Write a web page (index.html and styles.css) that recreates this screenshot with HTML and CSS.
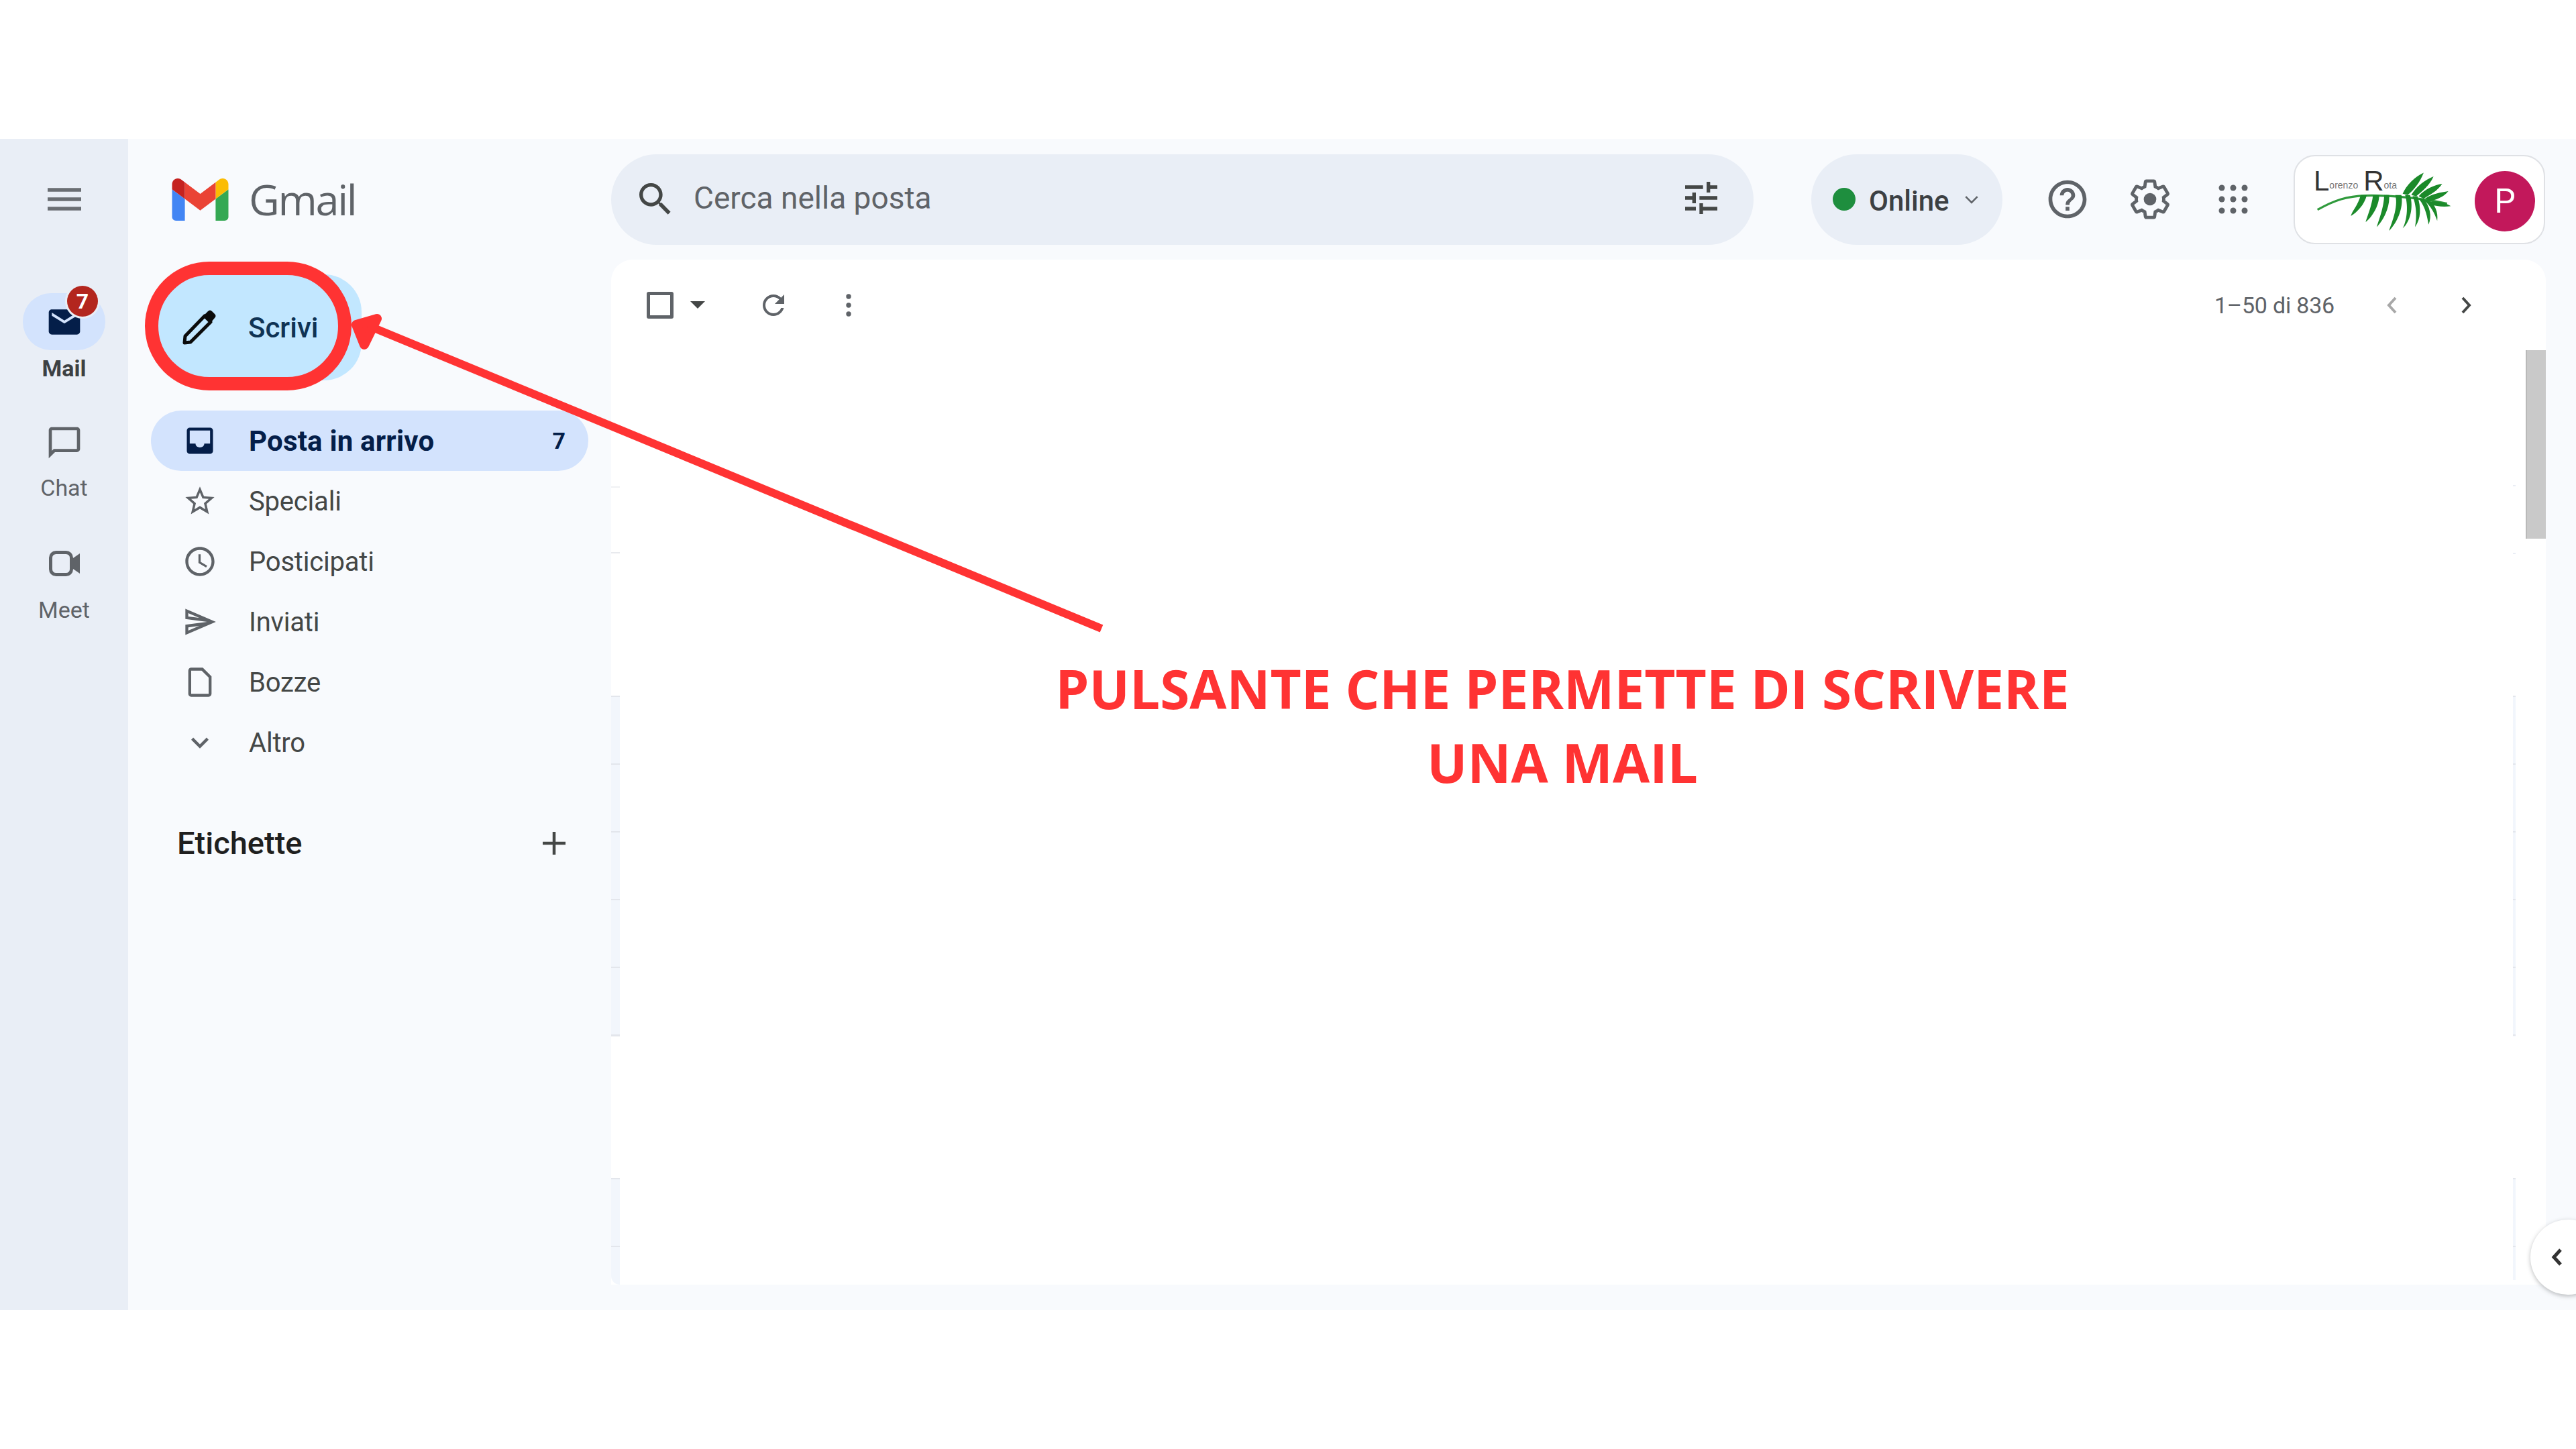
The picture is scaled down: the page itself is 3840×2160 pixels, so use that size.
FILE: index.html
```html
<!DOCTYPE html>
<html lang="it">
<head>
<meta charset="utf-8">
<title>Gmail</title>
<link rel="stylesheet" href="styles.css">
</head>
<body>
<div class="app">
  <nav class="rail">
    <svg class="rail-menu" viewBox="0 0 50 34"><path d="M0 3h50M0 17h50M0 31h50"/></svg>
    <div class="rail-item">
      <div class="rail-pill rail-pill-on">
        <svg viewBox="0 0 24 24" class="rail-icon icon-navy"><path d="M20 4H4c-1.1 0-1.99.9-1.99 2L2 18c0 1.1.9 2 2 2h16c1.1 0 2-.9 2-2V6c0-1.1-.9-2-2-2zm0 4l-8 5-8-5V6l8 5 8-5v2z"/></svg>
        <span class="rail-badge">7</span>
      </div>
      <span class="rail-label rail-label-on">Mail</span>
    </div>
    <div class="rail-item">
      <div class="rail-pill">
        <svg viewBox="0 0 24 24" class="rail-icon icon-grey"><path d="M20 2H4c-1.1 0-1.99.9-1.99 2L2 22l4-4h14c1.1 0 2-.9 2-2V4c0-1.1-.9-2-2-2zm0 14H5.17L4 17.17V4h16v12z"/></svg>
      </div>
      <span class="rail-label">Chat</span>
    </div>
    <div class="rail-item">
      <div class="rail-pill">
        <svg viewBox="0 0 46 38" class="rail-meet"><rect class="meet-body" x="2.500" y="2.500" width="31" height="33" rx="8"/><path class="meet-lens" d="M33 13L46 4v30L33 25z"/></svg>
      </div>
      <span class="rail-label rail-label-meet">Meet</span>
    </div>
  </nav>

  <div class="workspace">
    <header class="topbar">
      <div class="brand">
        <svg class="brand-mark" viewBox="52 42 88 66">
          <path fill="#4285f4" d="M58 108h14V74L52 59v43c0 3.32 2.69 6 6 6"/>
          <path fill="#34a853" d="M120 108h14c3.32 0 6-2.69 6-6V59l-20 15"/>
          <path fill="#fbbc04" d="M120 48v26l20-15v-8c0-7.42-8.47-11.65-14.4-7.2"/>
          <path fill="#ea4335" d="M72 74V48l24 18 24-18v26L96 92"/>
          <path fill="#c5221f" d="M52 51v8l20 15V48l-5.6-4.2c-5.94-4.45-14.4-.22-14.4 7.2"/>
        </svg>
        <span class="brand-name">Gmail</span>
      </div>
      <div class="search">
        <svg viewBox="0 0 24 24" class="search-icon icon-dark"><path d="M15.5 14h-.79l-.28-.27C15.41 12.59 16 11.11 16 9.5 16 5.91 13.09 3 9.5 3S3 5.91 3 9.5 5.91 16 9.5 16c1.61 0 3.09-.59 4.23-1.57l.27.28v.79l5 4.99L20.49 19l-4.99-5zm-6 0C7.01 14 5 11.99 5 9.5S7.01 5 9.5 5 14 7.01 14 9.5 11.99 14 9.5 14z"/></svg>
        <span class="search-text">Cerca nella posta</span>
        <svg viewBox="0 0 24 24" class="tune-icon icon-dark"><path d="M3 17v2h6v-2H3zM3 5v2h10V5H3zm10 16v-2h8v-2h-8v-2h-2v6h2zM7 9v2H3v2h4v2h2V9H7zm14 4v-2H11v2h10zm-6-4h2V7h4V5h-4V3h-2v6z"/></svg>
      </div>
      <div class="status">
        <span class="status-dot"></span>
        <span class="status-text">Online</span>
        <svg class="status-caret" viewBox="0 0 20 12"><path d="M2 2l8 8 8-8"/></svg>
      </div>
      <div class="top-icons">
        <svg viewBox="0 0 24 24" class="top-icon icon-grey"><path d="M11 18h2v-2h-2v2zm1-16C6.48 2 2 6.48 2 12s4.48 10 10 10 10-4.48 10-10S17.52 2 12 2zm0 18c-4.41 0-8-3.59-8-8s3.59-8 8-8 8 3.59 8 8-3.59 8-8 8zm0-14c-2.21 0-4 1.79-4 4h2c0-1.1.9-2 2-2s2 .9 2 2c0 2-3 1.75-3 5h2c0-2.25 3-2.5 3-5 0-2.21-1.79-4-4-4z"/></svg>
        <svg viewBox="0 0 24 24" class="top-icon gear"><path class="gear-rim" d="M19.14 12.94c.04-.3.06-.61.06-.94 0-.32-.02-.64-.07-.94l2.03-1.58c.18-.14.23-.41.12-.61l-1.92-3.32c-.12-.22-.37-.29-.59-.22l-2.39.96c-.5-.38-1.03-.7-1.62-.94l-.36-2.54c-.04-.24-.24-.41-.48-.41h-3.84c-.24 0-.43.17-.47.41l-.36 2.54c-.59.24-1.13.57-1.62.94l-2.39-.96c-.22-.08-.47 0-.59.22L2.74 8.87c-.12.21-.08.47.12.61l2.03 1.58c-.05.3-.09.63-.09.94s.02.64.07.94l-2.03 1.58c-.18.14-.23.41-.12.61l1.92 3.32c.12.22.37.29.59.22l2.39-.96c.5.38 1.03.7 1.62.94l.36 2.54c.05.24.24.41.48.41h3.84c.24 0 .44-.17.47-.41l.36-2.54c.59-.24 1.13-.56 1.62-.94l2.39.96c.22.08.47 0 .59-.22l1.92-3.32c.12-.22.07-.47-.12-.61l-2.01-1.58z"/><circle class="gear-hub" cx="12" cy="12" r="3.3"/></svg>
        <svg viewBox="0 0 46 46" class="grid-icon icon-grey">
          <circle cx="6" cy="6" r="4.5"/><circle cx="23" cy="6" r="4.5"/><circle cx="40" cy="6" r="4.5"/>
          <circle cx="6" cy="23" r="4.5"/><circle cx="23" cy="23" r="4.5"/><circle cx="40" cy="23" r="4.5"/>
          <circle cx="6" cy="40" r="4.5"/><circle cx="23" cy="40" r="4.5"/><circle cx="40" cy="40" r="4.5"/>
        </svg>
      </div>
      <div class="account">
        <div class="org-logo">
          <svg class="frond" viewBox="0 0 220 100">
            <path class="frond-rib" d="M2 66C30 50 50 44 80 43C120 42 175 48 212 56"/>
            <g class="frond-leaves">
              <path d="M72 42C68 58 58 68 56 76C66 70 78 58 82 42z"/>
              <path d="M92 42C90 60 82 78 80 86C90 78 102 60 102 42z"/>
              <path d="M110 42C110 62 100 86 98 94C108 84 120 62 118 42z"/>
              <path d="M128 42C134 62 120 92 118 100C130 88 142 64 138 42z"/>
              <path d="M144 42C150 62 146 86 140 96C152 86 158 62 152 42z"/>
              <path d="M156 44C164 62 162 84 160 94C170 80 170 62 164 44z"/>
              <path d="M166 48C178 62 180 80 182 90C188 76 184 60 174 48z"/>
              <path d="M174 50C186 60 192 72 196 84C198 70 192 56 182 50z"/>
              <path d="M140 40C146 26 160 12 174 6C168 22 158 34 148 42z"/>
              <path d="M154 42C162 28 176 18 190 12C184 26 172 36 162 44z"/>
              <path d="M166 44C176 32 192 26 204 24C196 36 184 42 174 48z"/>
              <path d="M176 48C188 40 202 38 214 36C206 46 194 50 184 52z"/>
              <path d="M182 54C194 50 208 54 218 60C206 62 194 60 186 58z"/>
            </g>
          </svg>
          <div class="org-name"><span class="org-cap">L</span><span class="org-small">orenzo</span><span class="org-cap org-cap-r">R</span><span class="org-small">ota</span></div>
        </div>
        <div class="avatar">P</div>
      </div>
    </header>

    <div class="body">
      <aside class="sidebar">
        <div class="compose">
          <svg class="compose-icon" viewBox="0 0 50 52">
            <path class="pen-body" d="M3 49l1-10L33 9l9 9L12 48z"/>
            <path class="pen-tip" d="M32 8l6-6c2-2 4-2 6 0l4 4c2 2 2 4 0 6l-5 6z"/>
          </svg>
          <span class="compose-text">Scrivi</span>
        </div>
        <ul class="nav">
          <li class="nav-item nav-item-on">
            <svg viewBox="0 0 24 24" class="nav-icon icon-navy"><path d="M19 3H5c-1.1 0-2 .9-2 2v14c0 1.1.9 2 2 2h14c1.1 0 2-.9 2-2V5c0-1.1-.9-2-2-2zm0 11h-4c0 1.66-1.34 2.6-3 2.6s-3-.94-3-2.6H5V5h14v9z"/></svg>
            <span class="nav-text">Posta in arrivo</span>
            <span class="nav-count">7</span>
          </li>
          <li class="nav-item">
            <svg viewBox="0 0 24 24" class="nav-icon icon-grey"><path d="M22 9.24l-7.19-.62L12 2 9.19 8.63 2 9.24l5.46 4.73L5.82 21 12 17.27 18.18 21l-1.63-7.03L22 9.24zM12 15.4l-3.76 2.27 1-4.28-3.32-2.88 4.38-.38L12 6.1l1.71 4.04 4.38.38-3.32 2.88 1 4.28L12 15.4z"/></svg>
            <span class="nav-text">Speciali</span>
          </li>
          <li class="nav-item">
            <svg viewBox="0 0 24 24" class="nav-icon icon-grey"><path d="M11.99 2C6.47 2 2 6.48 2 12s4.47 10 9.99 10C17.52 22 22 17.52 22 12S17.52 2 11.99 2zM12 20c-4.42 0-8-3.58-8-8s3.58-8 8-8 8 3.58 8 8-3.58 8-8 8zm.5-13H11v6l5.25 3.15.75-1.23-4.5-2.67z"/></svg>
            <span class="nav-text">Posticipati</span>
          </li>
          <li class="nav-item">
            <svg viewBox="0 0 24 24" class="nav-icon icon-grey"><path d="M4 6.03l7.51 3.22-7.52-1 .01-2.22m7.5 8.72L4 17.97v-2.22l7.5-1M2.01 3L2 10l15 2-15 2 .01 7L23 12 2.01 3z"/></svg>
            <span class="nav-text">Inviati</span>
          </li>
          <li class="nav-item">
            <svg viewBox="0 0 24 24" class="nav-icon icon-grey"><path d="M14 2H6c-1.1 0-1.99.9-1.99 2L4 20c0 1.1.89 2 1.99 2H18c1.1 0 2-.9 2-2V8l-6-6zM6 20V4h7.2L18 8.800V20H6z"/></svg>
            <span class="nav-text">Bozze</span>
          </li>
          <li class="nav-item">
            <svg viewBox="0 0 24 24" class="nav-icon icon-grey"><path d="M16.59 8.59L12 13.17 7.41 8.59 6 10l6 6 6-6z"/></svg>
            <span class="nav-text">Altro</span>
          </li>
        </ul>
        <div class="labels">
          <span class="labels-title">Etichette</span>
          <svg class="labels-add" viewBox="0 0 34 34"><path d="M17 0v34M0 17h34"/></svg>
        </div>
      </aside>

      <main class="main">
        <div class="toolbar">
          <span class="check"></span>
          <span class="check-caret"></span>
          <svg viewBox="0 0 24 24" class="tool-refresh icon-grey"><path d="M17.65 6.35C16.2 4.9 14.21 4 12 4c-4.42 0-7.99 3.58-7.99 8s3.57 8 7.99 8c3.73 0 6.84-2.55 7.73-6h-2.08c-.82 2.33-3.04 4-5.65 4-3.31 0-6-2.69-6-6s2.69-6 6-6c1.66 0 3.14.69 4.22 1.78L13 11h7V4l-2.35 2.35z"/></svg>
          <svg viewBox="0 0 8 34" class="tool-more icon-grey"><circle cx="4" cy="4" r="3.7"/><circle cx="4" cy="17" r="3.7"/><circle cx="4" cy="30" r="3.700"/></svg>
          <span class="pager-text">1–50 di 836</span>
          <svg class="pager-prev" viewBox="0 0 16 26"><path d="M13 2L3 13l10 11"/></svg>
          <svg class="pager-next" viewBox="0 0 16 26"><path d="M3 2l10 11L3 24"/></svg>
        </div>
        <div class="scrollbar"></div>
        <div class="ghost ghost-tick-a"></div>
        <div class="ghost ghost-tick-b"></div>
        <div class="ghost ghost-mid"></div>
        <div class="ghost ghost-low"></div>
        <div class="ghost-right ghost-right-tick-a"></div>
        <div class="ghost-right ghost-right-tick-b"></div>
        <div class="ghost-right ghost-right-mid"></div>
        <div class="ghost-right ghost-right-low"></div>
      </main>
    </div>
  </div>
  <div class="side-tab">
    <svg viewBox="0 0 20 30"><path d="M15 4L5 15l10 11"/></svg>
  </div>
</div>

<svg class="callout" viewBox="0 0 3840 2160">
  <rect class="callout-ring" x="226" y="400" width="288" height="172" rx="86"/>
  <path class="callout-shaft" d="M1642 937L560 490"/>
  <path class="callout-head" d="M531 484L562 475L543 514z"/>
</svg>
<p class="callout-text">PULSANTE CHE PERMETTE DI SCRIVERE<br>UNA MAIL</p>
</body>
</html>
```

FILE: styles.css
```css
* { box-sizing: border-box; }
html, body { margin: 0; padding: 0; background: #fff; }
body { position: relative; width: 3840px; height: 2160px; padding-top: 207px; overflow: hidden; font-family: Roboto, "Liberation Sans", sans-serif; color: #444746; }
svg { display: block; flex: none; }
ul { list-style: none; margin: 0; padding: 0; }

.icon-grey { fill: #5f6368; }
.icon-dark { fill: #444746; }
.icon-navy { fill: #041e49; }

.app { position: relative; height: 1746px; display: flex; background: #f8fafd; overflow: hidden; }

.rail { width: 191px; flex: none; background: #e9eef6; display: flex; flex-direction: column; align-items: center; padding-top: 73px; }
.rail-menu { width: 50px; height: 34px; fill: none; stroke: #6a6e73; stroke-width: 5.500; margin-bottom: 123px; }
.rail-item { display: flex; flex-direction: column; align-items: center; width: 100%; height: 180px; }
.rail-pill { position: relative; width: 123px; height: 85px; border-radius: 42px; display: flex; align-items: center; justify-content: center; }
.rail-pill-on { background: #d3e3fd; }
.rail-icon { width: 56px; height: 56px; }
.rail-meet { width: 46px; height: 38px; }
.meet-body { fill: none; stroke: #5f6368; stroke-width: 5; }
.meet-lens { fill: #5f6368; }
.rail-badge { position: absolute; left: 66px; top: -11px; width: 46px; height: 46px; border-radius: 50%; background: #b3261e; box-shadow: 0 0 0 3px #e9eef6; color: #fff; font-size: 32px; font-weight: 700; line-height: 46px; text-align: center; }
.rail-label { font-size: 34px; line-height: 40px; color: #5f6368; margin-top: 5px; }
.rail-label-on { font-weight: 700; color: #3c4043; margin-top: 7px; }
.rail-label-meet { margin-top: 7px; }

.workspace { flex: 1; min-width: 0; display: flex; flex-direction: column; }

.topbar { height: 180px; flex: none; display: flex; align-items: center; }
.brand { width: 720px; flex: none; display: flex; align-items: center; padding-left: 65px; gap: 30px; }
.brand-mark { width: 85px; height: 63px; }
.brand-name { font-family: "Open Sans", Roboto, sans-serif; font-size: 63px; line-height: 70px; color: #5f6368; letter-spacing: -2.300px; }

.search { width: 1703px; height: 135px; flex: none; border-radius: 68px; background: #e9eef6; display: flex; align-items: center; padding: 0 46px 0 34px; }
.search-icon { width: 64px; height: 64px; margin-right: 25px; }
.search-text { flex: 1; font-size: 46px; color: #5f6368; position: relative; top: -2px; }
.tune-icon { width: 64px; height: 64px; position: relative; top: -2px; }

.status { width: 285px; height: 135px; flex: none; margin-left: 86px; border-radius: 68px; background: #e9eef6; display: flex; align-items: center; padding-left: 32px; }
.status-dot { width: 34px; height: 34px; border-radius: 50%; background: #1e8e3e; }
.status-text { font-size: 42px; font-weight: 500; color: #3c4043; margin-left: 20px; position: relative; top: 2px; }
.status-caret { width: 22px; height: 13px; fill: none; stroke: #5f6368; stroke-width: 2.4; margin-left: 22px; }

.top-icons { display: flex; align-items: center; margin-left: 63px; }
.top-icon { width: 68px; height: 68px; }
.gear { margin-left: 55px; }
.gear-rim { fill: none; stroke: #5f6368; stroke-width: 1.7; }
.gear-hub { fill: #5f6368; }
.grid-icon { width: 46px; height: 46px; margin-left: 67px; }

.account { width: 375px; height: 133px; flex: none; margin-left: 67px; background: #fff; border: 2px solid #dfe1e5; border-radius: 32px; display: flex; align-items: center; justify-content: space-between; padding: 0 13px 0 22px; }
.org-logo { position: relative; width: 222px; height: 92px; margin-top: 2px; }
.frond { position: absolute; left: 0; top: 0; width: 222px; height: 92px; }
.frond-rib { fill: none; stroke: #2f9a3c; stroke-width: 3.500; }
.frond-leaves { fill: #1b8a2a; }
.org-name { position: absolute; left: 6px; top: -2px; display: flex; align-items: flex-end; color: #333; font-family: "Liberation Sans", sans-serif; line-height: 40px; }
.org-cap { font-size: 42px; }
.org-cap-r { margin-left: 8px; }
.org-small { font-size: 14px; line-height: 28px; color: #777; }
.avatar { width: 90px; height: 90px; border-radius: 50%; background: #c2185b; color: #fff; font-size: 50px; line-height: 90px; text-align: center; margin-top: 6px; }

.body { flex: 1; min-height: 0; display: flex; padding-bottom: 38px; }

.sidebar { width: 720px; flex: none; padding: 22px 0 0 34px; }
.compose { width: 314px; height: 158px; border-radius: 56px; background: #c2e7ff; display: flex; align-items: center; padding-left: 47px; gap: 48px; }
.compose-icon { width: 50px; height: 52px; }
.pen-body { fill: none; stroke: #0b0b0b; stroke-width: 5; stroke-linejoin: round; }
.pen-tip { fill: #0b0b0b; }
.compose-text { font-size: 42px; font-weight: 500; color: #0f3354; }

.nav { margin-top: 45px; width: 652px; }
.nav-item { height: 90px; border-radius: 45px; display: flex; align-items: center; padding: 0 34px 0 47px; font-size: 40px; color: #444746; }
.nav-item-on { background: #d3e3fd; color: #041e49; font-weight: 700; }
.nav-item-on .nav-text { font-size: 42px; letter-spacing: .2px; }
.nav-icon { width: 52px; height: 52px; }
.nav-text { flex: 1; margin-left: 47px; letter-spacing: -.2px; }
.nav-count { font-size: 34px; }

.labels { margin-top: 72px; width: 652px; display: flex; align-items: center; justify-content: space-between; padding: 0 34px 0 39px; }
.labels-title { font-size: 47px; font-weight: 500; color: #1f1f1f; line-height: 66px; }
.labels-add { width: 34px; height: 34px; fill: none; stroke: #444746; stroke-width: 4.500; }

.main { position: relative; width: 2884px; flex: none; background: #fff; border-radius: 32px 32px 0 0; overflow: hidden; }
.toolbar { height: 135px; display: flex; align-items: center; padding-left: 53px; }
.check { width: 40px; height: 40px; border: 5px solid #5f6368; border-radius: 3px; }
.check-caret { width: 0; height: 0; margin-left: 25px; border-left: 11px solid transparent; border-right: 11px solid transparent; border-top: 11px solid #444746; }
.tool-refresh { width: 48px; height: 48px; margin-left: 78px; }
.tool-more { width: 8px; height: 34px; margin-left: 84px; }
.pager-text { margin-left: auto; font-size: 34px; color: #5f6368; letter-spacing: -.2px; }
.pager-prev, .pager-next { width: 16px; height: 26px; fill: none; stroke-width: 4; }
.pager-prev { stroke: #a8a8a8; margin-left: 78px; }
.pager-next { stroke: #444746; margin-left: 94px; margin-right: 111px; }

.scrollbar { position: absolute; right: 0; top: 135px; width: 30px; height: 281px; background: #c9c9c9; border-left: 2px solid #b9b9b9; }

.ghost { position: absolute; left: 0; width: 13px; }
.ghost-tick-a { top: 338px; height: 2px; background: #f0f1f4; }
.ghost-tick-b { top: 436px; height: 2px; background: #e8eaee; }
.ghost-mid { top: 650px; height: 508px; background: repeating-linear-gradient(to bottom, #e3e6ec 0 2px, #f2f6fc 2px 101px); border-bottom: 2px solid #e3e6ec; }
.ghost-low { top: 1369px; height: 159px; background: repeating-linear-gradient(to bottom, #e3e6ec 0 2px, #f2f6fc 2px 101px); border-bottom-left-radius: 26px; }

.ghost-right { position: absolute; right: 45px; width: 4px; }
.ghost-right-tick-a { top: 336px; height: 2px; background: #e9edf5; }
.ghost-right-tick-b { top: 437px; height: 2px; background: #e9edf5; }
.ghost-right-mid { top: 650px; height: 508px; background: repeating-linear-gradient(to bottom, #e3e6ec 0 2px, #f2f6fc 2px 101px); }
.ghost-right-low { top: 1369px; height: 152px; background: repeating-linear-gradient(to bottom, #e3e6ec 0 2px, #f2f6fc 2px 101px); }

.side-tab { position: absolute; left: 3772px; top: 1611px; width: 112px; height: 112px; border-radius: 50%; background: #fff; box-shadow: 0 2px 6px rgba(60,64,67,.35); display: flex; align-items: center; padding-left: 30px; }
.side-tab svg { width: 20px; height: 30px; fill: none; stroke: #333; stroke-width: 5; }

.callout { position: absolute; left: 0; top: 0; width: 3840px; height: 2160px; pointer-events: none; }
.callout-ring { fill: none; stroke: #ff3333; stroke-width: 20; }
.callout-shaft { fill: none; stroke: #ff3333; stroke-width: 12; }
.callout-head { fill: #ff3333; stroke: #ff3333; stroke-width: 14; stroke-linejoin: round; }
.callout-text { position: absolute; left: 1429px; top: 971px; width: 1800px; margin: 0; text-align: center; font-family: "Open Sans", sans-serif; font-weight: 700; font-size: 80px; line-height: 110px; color: #ff3333; }
```
